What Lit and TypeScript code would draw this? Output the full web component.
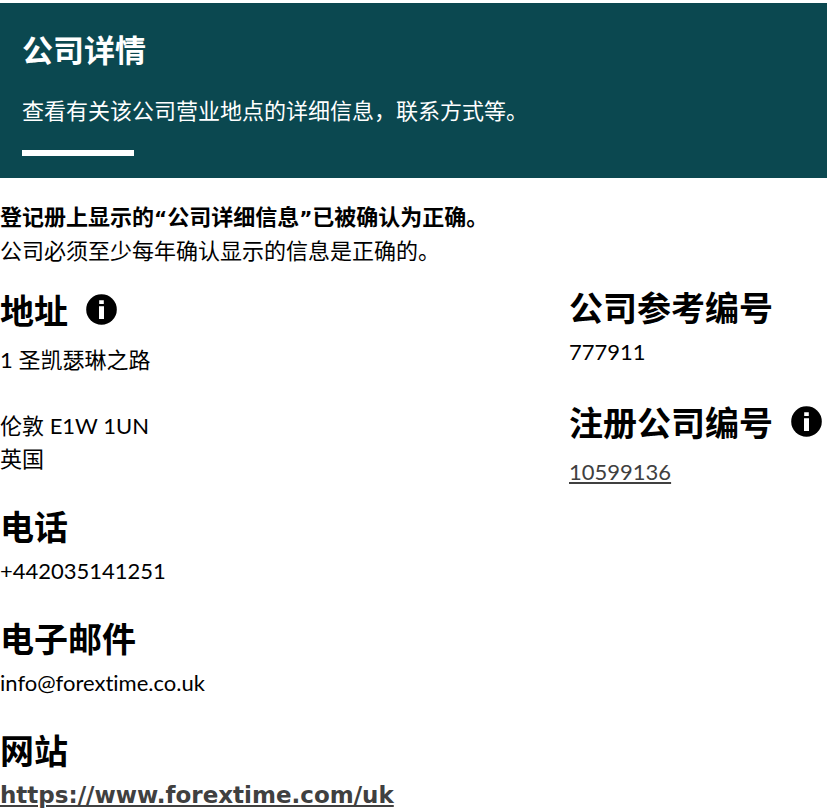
import { LitElement, html, css } from "lit";
import { customElement, property } from "lit/decorators.js";

@customElement("info-button")
class InfoButton extends LitElement {
  @property() label = "";

  static styles = css`
    :host {
      display: inline-flex;
      flex: none;
    }
    .button {
      display: block;
      width: 31px;
      height: 31px;
      padding: 0;
      border: 0;
      border-radius: 50%;
      background: none;
      cursor: pointer;
    }
    .icon {
      display: block;
    }
  `;

  render() {
    return html`
      <button class="button" type="button" aria-label=${this.label}>
        <svg class="icon" width="31" height="31" viewBox="0 0 31 31" aria-hidden="true">
          <circle cx="15.5" cy="15.5" r="15.3" fill="#000" />
          <path d="M13.2 6.2h4.6v3.8h-4.6zM13 12.3h5v12.6h-5z" fill="#fff" />
        </svg>
      </button>
    `;
  }
}

@customElement("app-root")
class AppRoot extends LitElement {
  static styles = css`
    :host {
      display: block;
      padding-top: 3px;
      background: #fff;
      color: #000;
      font: 22px/33px Lato, "Noto Sans CJK SC", sans-serif;
      font-variant-ligatures: none;
    }
    h1,
    h2,
    p,
    address {
      margin: 0;
      font-style: normal;
    }
    .banner {
      padding: 25px 22px 22px;
      background: #0b4850;
      color: #fff;
    }
    .title {
      font-size: 31px;
      line-height: 44px;
    }
    .lead {
      margin-top: 22px;
    }
    .rule {
      width: 112px;
      height: 6px;
      margin-top: 23px;
      background: #fff;
    }
    .notice {
      margin-top: 22px;
      line-height: 34px;
    }
    .quote {
      font-family: "DejaVu Sans", sans-serif;
      font-size: 20px;
      line-height: 1;
    }
    .details {
      display: grid;
      grid-template-columns: minmax(0, 1fr) 258px;
      margin-top: 18px;
    }
    .column {
      display: flex;
      flex-direction: column;
      gap: 30px;
    }
    .heading-row {
      display: flex;
      align-items: center;
      gap: 18px;
      margin-bottom: 5px;
    }
    .heading-row.with-info {
      min-height: 50px;
      margin-bottom: 7px;
    }
    .info {
      margin-bottom: 4px;
    }
    .heading {
      font-size: 34px;
      line-height: 44px;
      white-space: nowrap;
    }
    .link {
      color: #404040;
      text-decoration-thickness: 2px;
      text-underline-offset: 2px;
    }
    .website {
      font-family: "DejaVu Sans", sans-serif;
      font-size: 23px;
      font-weight: 700;
    }
  `;

  private section(title: string, body: unknown, info = false) {
    return html`
      <section>
        <div class="heading-row ${info ? "with-info" : ""}">
          <h2 class="heading">${title}</h2>
          ${info ? html`<info-button class="info" label="${title}说明"></info-button>` : null}
        </div>
        ${body}
      </section>
    `;
  }

  render() {
    return html`
      <header class="banner">
        <h1 class="title">公司详情</h1>
        <p class="lead">查看有关该公司营业地点的详细信息，联系方式等。</p>
        <div class="rule"></div>
      </header>
      <main>
        <div class="notice">
          <p><strong>登记册上显示的<span class="quote">“</span>公司详细信息<span class="quote">”</span>已被确认为正确。</strong></p>
          <p>公司必须至少每年确认显示的信息是正确的。</p>
        </div>
        <div class="details">
          <div class="column">
            ${this.section("地址", html`<address>1 圣凯瑟琳之路<br /><br />伦敦 E1W 1UN<br />英国</address>`, true)}
            ${this.section("电话", html`<p>+442035141251</p>`)}
            ${this.section("电子邮件", html`<p>info@forextime.co.uk</p>`)}
            ${this.section("网站", html`<a class="link website" href="https://www.forextime.com/uk">https://www.forextime.com/uk</a>`)}
          </div>
          <div class="column">
            ${this.section("公司参考编号", html`<p>777911</p>`)}
            ${this.section("注册公司编号", html`<a class="link" href="#10599136">10599136</a>`, true)}
          </div>
        </div>
      </main>
    `;
  }
}
